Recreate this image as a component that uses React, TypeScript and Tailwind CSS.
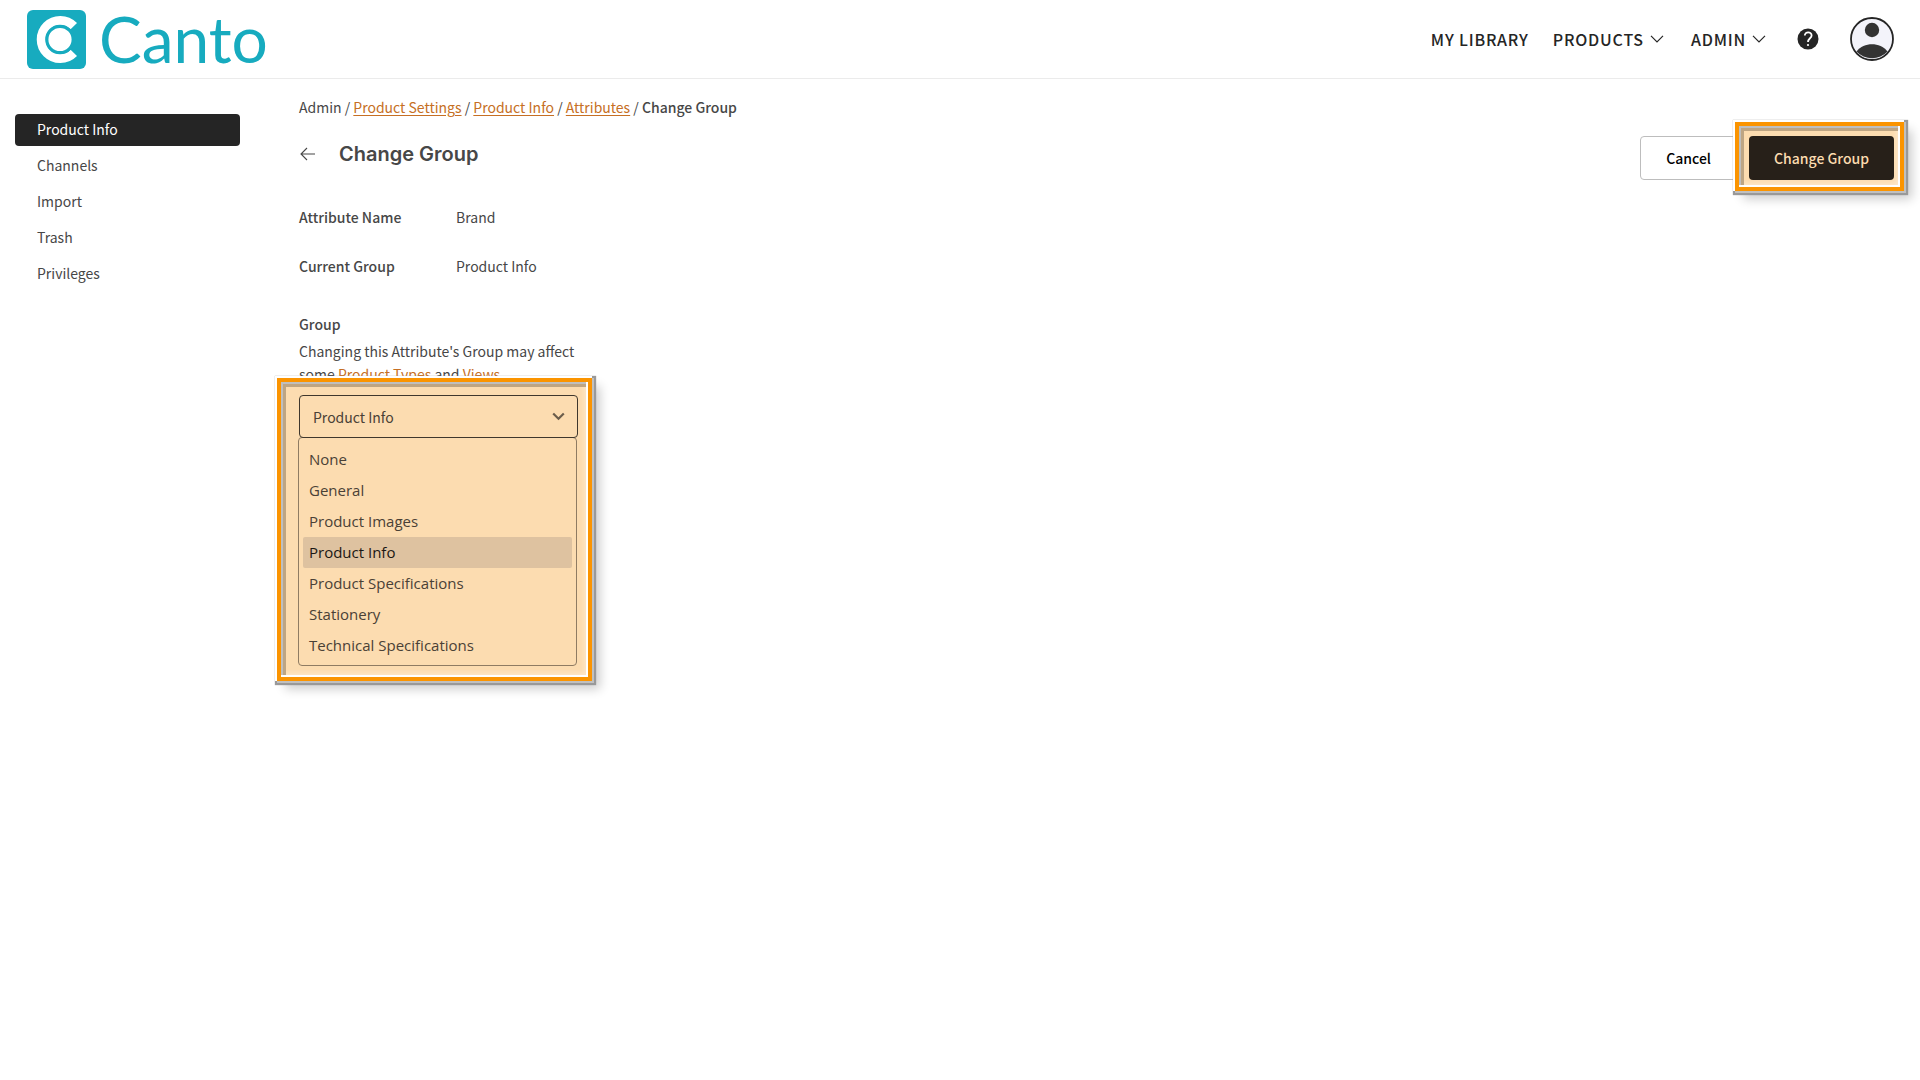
import React, { useState } from 'react';

const GROUPS = ['None', 'General', 'Product Images', 'Product Info', 'Product Specifications', 'Stationery', 'Technical Specifications'];

const SIDEBAR_LINKS = ['Product Info', 'Channels', 'Import', 'Trash', 'Privileges'];

const BREADCRUMBS = ['Product Settings', 'Product Info', 'Attributes'];

interface CalloutProps {
	className?: string;
	children: React.ReactNode;
}

// Orange bevelled frame used to point out a control
const Callout: React.FC<CalloutProps> = ({ className = '', children }) => (
	<div
		className={`relative z-10 border-4 border-[#fb9400] bg-[#fcdcb0] shadow-[inset_-2px_-2px_0_#ffffff,inset_2px_2px_0_#bfbfbf,inset_5px_5px_0_#bea583,inset_-4px_-4px_4px_#fde6c8,-1px_-1px_0_1px_#ffffff,1px_1px_0_1px_#c0c0c0,1px_1px_1px_3px_#999999,8px_8px_10px_#00000033] ${className}`}
	>
		{children}
	</div>
);

const Logo = () => (
	<a href="#" className="flex items-center gap-3 text-[#17abbf]">
		<svg width="60" height="60" viewBox="0 0 60 60" aria-hidden="true">
			<rect x="0" y="1" width="59" height="59" rx="6" fill="currentColor" />
			<path d="M46.8 17.2A19 19 0 1 0 46.8 43.8" fill="none" stroke="#fff" strokeWidth="9" />
			<circle cx="33" cy="30.500" r="13.200" fill="#fff" stroke="currentColor" strokeWidth="3.200" />
		</svg>
		<span className="font-[Lato,sans-serif] text-[64px] leading-[60px] font-normal">Canto</span>
	</a>
);

const ChevronDown = () => (
	<svg width="14" height="8" viewBox="0 0 14 8" fill="none" stroke="currentColor" strokeWidth="1.2" aria-hidden="true">
		<path d="M1 0.8L7 6.8L13 0.8" />
	</svg>
);

const Header = () => (
	<header className="flex h-[79px] items-center justify-between border-b border-[#ebebeb] pr-[26px] pl-[27px]">
		<Logo />
		<nav className="flex items-center text-base font-medium tracking-wider text-[#252525]">
			<a href="#" className="mr-6">
				MY LIBRARY
			</a>
			<button type="button" className="mr-[27px] flex items-center gap-[6px] tracking-wider">
				PRODUCTS
				<ChevronDown />
			</button>
			<button type="button" className="mr-[31px] flex items-center gap-[6px] tracking-wider">
				ADMIN
				<ChevronDown />
			</button>
			<button type="button" aria-label="Help" className="mr-[31px]">
				<svg width="22" height="22" viewBox="0 0 22 22" aria-hidden="true">
					<circle cx="11" cy="11" r="10.5" fill="#252525" />
					<path d="M7.8 7.6C7.8 3.2 14.6 3.3 14.6 7.5C14.6 10.2 11 10.4 11 14" fill="none" stroke="#fff" strokeWidth="1.8" />
					<circle cx="11" cy="17" r="1.1" fill="#fff" />
				</svg>
			</button>
			<button type="button" aria-label="Account">
				<svg width="44" height="44" viewBox="0 0 44 44" aria-hidden="true">
					<circle cx="22" cy="22" r="21" fill="#f3f3fa" />
					<circle cx="22" cy="13" r="7.2" fill="#333" />
					<path d="M6.5 34.5C14 24.8 30 24.8 37.5 34.5A21 21 0 0 1 6.5 34.5Z" fill="#333" />
					<circle cx="22" cy="22" r="21" fill="none" stroke="#252525" strokeWidth="1.8" />
				</svg>
			</button>
		</nav>
	</header>
);

const Sidebar = () => (
	<aside className="w-[225px] shrink-0 pt-[35px]">
		<ul className="flex flex-col gap-1">
			{SIDEBAR_LINKS.map((link, index) => (
				<li key={link}>
					<a href="#" className={`block rounded px-[22px] pb-[2px] leading-[30px] ${index === 0 ? 'bg-[#252525] text-white' : ''}`}>
						{link}
					</a>
				</li>
			))}
		</ul>
	</aside>
);

const GroupSelect = () => {
	const [group, setGroup] = useState('Product Info');

	return (
		<Callout className="-mt-2 -ml-[22px] w-[315px] pt-[13px] pr-[10px] pb-[11px] pl-[18px]">
			<div className="relative">
				<select
					id="group"
					value={group}
					onChange={e => setGroup(e.target.value)}
					className="block h-[43px] w-full appearance-none rounded border border-[#3f372c] px-[13px] text-sm text-[#4a4136]"
				>
					{GROUPS.map(name => (
						<option key={name}>{name}</option>
					))}
				</select>
				<svg className="pointer-events-none absolute top-[17px] right-[13px]" width="13" height="9" viewBox="0 0 13 9" fill="none" stroke="#6b5d4b" strokeWidth="2.2" aria-hidden="true">
					<path d="M1.2 1.5L6.5 6.7L11.8 1.5" />
				</svg>
			</div>
			<ul
				role="listbox"
				aria-label="Group"
				className="-mt-px mr-px -ml-px rounded border border-[#8f7b62] px-1 pt-[6px] pb-1 font-['Open_Sans','Noto_Sans',sans-serif] text-[15px] leading-[31px] text-[#4a4136]"
			>
				{GROUPS.map(name => (
					<li
						key={name}
						role="option"
						aria-selected={name === group}
						onClick={() => setGroup(name)}
						className={`rounded-xs px-[6px] ${name === group ? 'bg-[#dec2a0] text-[#1b1713]' : ''}`}
					>
						{name}
					</li>
				))}
			</ul>
		</Callout>
	);
};

export default function App() {
	return (
		<div className="min-h-screen bg-white font-['Noto_Sans_CJK_SC',sans-serif] text-sm text-[#474747]">
			<Header />
			<div className="flex gap-[59px] pr-4 pl-[15px]">
				<Sidebar />
				<main className="min-w-0 flex-1 pt-4">
					<nav aria-label="Breadcrumb" className="leading-6">
						Admin /{' '}
						{BREADCRUMBS.map(crumb => (
							<React.Fragment key={crumb}>
								<a href="#" className="text-[#c66f24] underline underline-offset-2">
									{crumb}
								</a>
								{' / '}
							</React.Fragment>
						))}
						<span className="font-medium">Change Group</span>
					</nav>

					<div className="mt-[3px] flex justify-between">
						<div className="flex h-16 items-center gap-6">
							<button type="button" aria-label="Back">
								<svg width="16" height="14" viewBox="0 0 16 14" fill="none" stroke="currentColor" strokeWidth="1.1" aria-hidden="true">
									<path d="M16 7H2M8 1L2 7L8 13" />
								</svg>
							</button>
							<h1 className="font-[Inter,sans-serif] text-xl font-semibold">Change Group</h1>
						</div>
						<div className="flex items-start">
							<button type="button" className="mt-[14px] h-11 rounded border border-[#bdbdbd] px-[25px] font-medium text-black">
								Cancel
							</button>
							<Callout className="-ml-[2px] pt-[10px] pr-[6px] pb-[7px] pl-[10px]">
								<button type="button" className="h-11 rounded bg-[#272019] px-[25px] font-medium text-[#fcdcb0]">
									Change Group
								</button>
							</Callout>
						</div>
					</div>

					<dl className="mt-[14px] grid grid-cols-[157px_1fr] gap-y-[25px] leading-6">
						<dt className="font-medium">Attribute Name</dt>
						<dd>Brand</dd>
						<dt className="font-medium">Current Group</dt>
						<dd>Product Info</dd>
					</dl>

					<label htmlFor="group" className="mt-[34px] block leading-6 font-medium">
						Group
					</label>
					<p className="mt-1 max-w-[280px] leading-[23px]">
						Changing this Attribute's Group may affect some{' '}
						<a href="#" className="text-[#c66f24]">
							Product Types
						</a>{' '}
						and{' '}
						<a href="#" className="text-[#c66f24]">
							Views
						</a>
						.
					</p>
					<GroupSelect />
				</main>
			</div>
		</div>
	);
}
